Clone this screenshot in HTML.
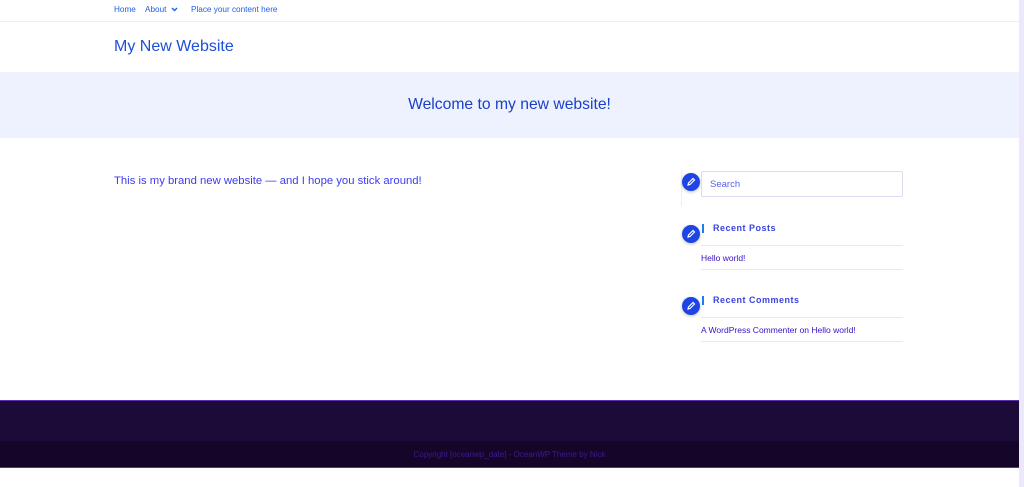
<!DOCTYPE html>
<html><head><meta charset="utf-8"><style>
*{margin:0;padding:0;box-sizing:border-box}
body{width:1024px;height:487px;overflow:hidden;background:#fff;font-family:"Liberation Sans",Arial,sans-serif;position:relative}
.sb{position:absolute;left:1019px;top:0;width:5px;height:487px;background:#ece8fb}
.page{position:absolute;left:0;top:0;width:1019px}
.nav{height:22px;border-bottom:1px solid #eee;position:relative}
.nav a{position:absolute;top:5px;font-size:8.2px;color:#1e5ee6;text-decoration:none}
.title{position:absolute;left:114px;top:38px;font-size:16px;color:#1d4fd8}
.banner{position:absolute;top:72px;left:0;width:1019px;height:66px;background:#eef2fe}
.banner div{position:absolute;left:0;width:1019px;top:24px;text-align:center;font-size:15.7px;color:#1a3fc8}
.intro{position:absolute;left:114px;top:175px;font-size:11.3px;color:#3b3bf0}
.pen{position:absolute;left:682px;width:18px;height:18px;border-radius:50%;background:#1e44e6;box-shadow:0 1px 3px rgba(0,0,0,.25)}
.pen svg{position:absolute;left:4px;top:4px}
.search{position:absolute;left:701px;top:171px;width:202px;height:26px;border:1px solid #d8dcf5;border-radius:2px;font-size:9.5px;color:#5b62e8;padding:7px 8px}
.vl{position:absolute;left:681px;top:170px;width:1px;height:36px;background:#eee}
.wt{position:absolute;left:713px;font-size:9px;font-weight:bold;color:#3a44e0;letter-spacing:.5px}
.bar{position:absolute;left:702px;width:2px;height:9px;background:#1e7bf0}
.hl{position:absolute;left:701px;width:202px;height:1px;background:#e6e8f4}
.lk{position:absolute;left:701px;font-size:8.5px;color:#3a10c8}
.f1{position:absolute;top:400px;left:0;width:1019px;height:41px;background:#1c0a38;border-top:1px solid #5a2fb0}
.f2{position:absolute;top:441px;left:0;width:1019px;height:27px;background:#150629;border-bottom:1px solid #5a2fb0;text-align:center;font-size:8px;color:#3a1a90;padding-top:9px}
</style></head><body>
<div class="sb"></div>
<div class="page">
<div class="nav">
<a style="left:114px">Home</a>
<a style="left:145px">About <svg width="7" height="5" viewBox="0 0 7 5" style="margin-left:2px"><path d="M1 1 L3.5 3.5 L6 1" fill="none" stroke="#1e5ee6" stroke-width="1.4"/></svg></a>
<a style="left:191px">Place your content here</a>
</div>
<div class="title">My New Website</div>
<div class="banner"><div>Welcome to my new website!</div></div>
<div class="intro">This is my brand new website — and I hope you stick around!</div>

<div class="vl"></div>
<div class="pen" style="top:173px"><svg width="10" height="10" viewBox="0 0 10 10"><path d="M2 8 L2.5 6 L7 1.5 L8.5 3 L4 7.5 Z" fill="none" stroke="#fff" stroke-width="1.2"/></svg></div>
<div class="search">Search</div>

<div class="pen" style="top:225px"><svg width="10" height="10" viewBox="0 0 10 10"><path d="M2 8 L2.5 6 L7 1.5 L8.5 3 L4 7.5 Z" fill="none" stroke="#fff" stroke-width="1.2"/></svg></div>
<div class="bar" style="top:224px"></div>
<div class="wt" style="top:223px">Recent Posts</div>
<div class="hl" style="top:245px"></div>
<div class="lk" style="top:253px">Hello world!</div>
<div class="hl" style="top:269px"></div>

<div class="pen" style="top:297px"><svg width="10" height="10" viewBox="0 0 10 10"><path d="M2 8 L2.5 6 L7 1.5 L8.5 3 L4 7.5 Z" fill="none" stroke="#fff" stroke-width="1.2"/></svg></div>
<div class="bar" style="top:296px"></div>
<div class="wt" style="top:295px">Recent Comments</div>
<div class="hl" style="top:317px"></div>
<div class="lk" style="top:325px">A WordPress Commenter on Hello world!</div>
<div class="hl" style="top:341px"></div>

<div class="f1"></div>
<div class="f2">Copyright [oceanwp_date] - OceanWP Theme by Nick</div>
</div>
</body></html>
